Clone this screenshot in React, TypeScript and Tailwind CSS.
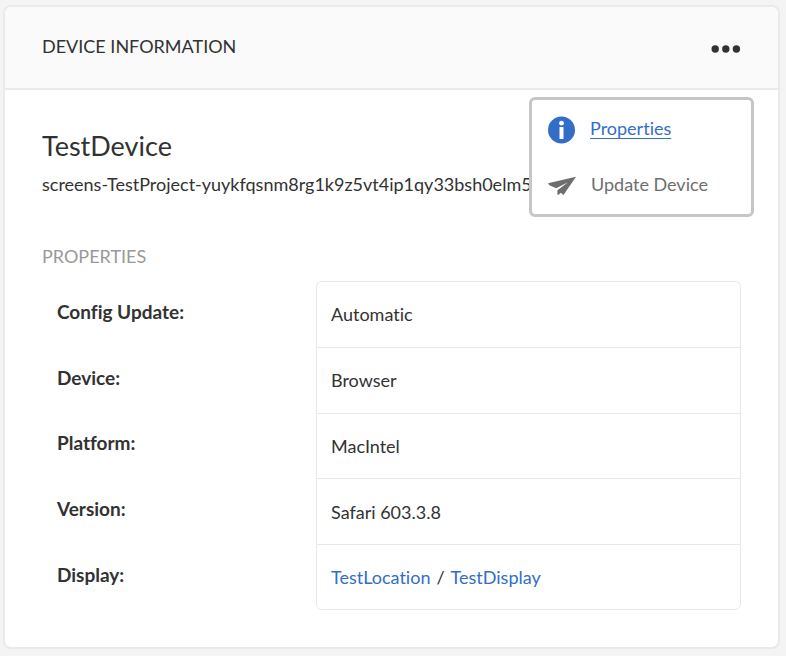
import type { ReactNode } from "react";

const details = [
  { label: "Config Update:", value: "Automatic" },
  { label: "Device:", value: "Browser" },
  { label: "Platform:", value: "MacIntel" },
  { label: "Version:", value: "Safari 603.3.8" },
];

function InfoIcon() {
  return (
    <svg viewBox="0 0 28 28" className="size-7 shrink-0" aria-hidden="true">
      <circle cx="13.5" cy="14" r="13.5" fill="#326ec8" />
      <circle cx="13.5" cy="7.2" r="2.4" fill="#fff" />
      <rect x="11.5" y="11" width="4" height="12" rx="0.5" fill="#fff" />
    </svg>
  );
}

function SendIcon() {
  return (
    <svg viewBox="0 0 28 20" className="h-5 w-7 shrink-0" aria-hidden="true" fill="#6e6e6e">
      <path d="M28 .8 0 7.2l1.4 2 6.8 3L20 6.2l-10.6 8v4.6l1.6-.4 1.7-1.6 2.8 2.3L28 .8Z" />
    </svg>
  );
}

function ActionsMenu() {
  return (
    <div className="absolute top-full right-6 mt-[9px] flex h-[120px] w-[225px] flex-col justify-between rounded-md border-3 border-[#c6c6c6] bg-white px-4 pt-4 pb-[14px]">
      <a href="#properties" className="flex items-center gap-[14px] text-[#326ec8]">
        <InfoIcon />
        <span className="pb-1 underline underline-offset-3">Properties</span>
      </a>
      <button type="button" className="flex items-center gap-[15px] text-left text-[#6e6e6e]">
        <SendIcon />
        <span className="pb-1">Update Device</span>
      </button>
    </div>
  );
}

function DetailRow({ label, children }: { label: string; children: ReactNode }) {
  return (
    <div className="group grid grid-cols-[274px_1fr]">
      <dt className="self-center pb-1 pl-[15px] text-[19px] font-bold">{label}</dt>
      <dd className="flex items-center gap-[6px] border border-b-0 border-[#e8e8e8] pl-[14px] group-first:rounded-t-md group-last:rounded-b-md group-last:border-b">
        {children}
      </dd>
    </div>
  );
}

export default function App() {
  return (
    <div className="min-h-screen bg-[#f4f4f4] pt-[5px] pr-[6px] pb-[7px] pl-[3px] font-['Lato','Noto_Sans',sans-serif] text-[18px] leading-6 text-[#323232] [font-variant-ligatures:none]">
      <section className="rounded-lg border-2 border-[#eaeaea] bg-white">
        <header className="relative flex h-[83px] items-center justify-between rounded-t-md border-b-2 border-[#eaeaea] bg-[#fafafa] px-[37px]">
          <h2 className="pb-1">DEVICE INFORMATION</h2>
          <button type="button" aria-label="More actions" className="pt-[2px]">
            <svg viewBox="0 0 30 8" className="h-2 w-[30px]" fill="#323232" aria-hidden="true">
              <circle cx="4.2" cy="4" r="3.7" />
              <circle cx="14.8" cy="4" r="3.7" />
              <circle cx="25.4" cy="4" r="3.7" />
            </svg>
          </button>
          <ActionsMenu />
        </header>
        <div className="px-[37px] pt-10 pb-[37px]">
          <h1 className="text-[27px] leading-8">TestDevice</h1>
          <p className="mt-[10px]">screens-TestProject-yuykfqsnm8rg1k9z5vt4ip1qy33bsh0elm5</p>
          <h3 className="mt-12 text-[#999999]">PROPERTIES</h3>
          <dl className="mt-[13px] grid h-[329px] auto-rows-fr">
            {details.map((d) => (
              <DetailRow key={d.label} label={d.label}>
                {d.value}
              </DetailRow>
            ))}
            <DetailRow label="Display:">
              <a href="#location" className="text-[#326ec8]">TestLocation</a>
              <span>/</span>
              <a href="#display" className="text-[#326ec8]">TestDisplay</a>
            </DetailRow>
          </dl>
        </div>
      </section>
    </div>
  );
}
